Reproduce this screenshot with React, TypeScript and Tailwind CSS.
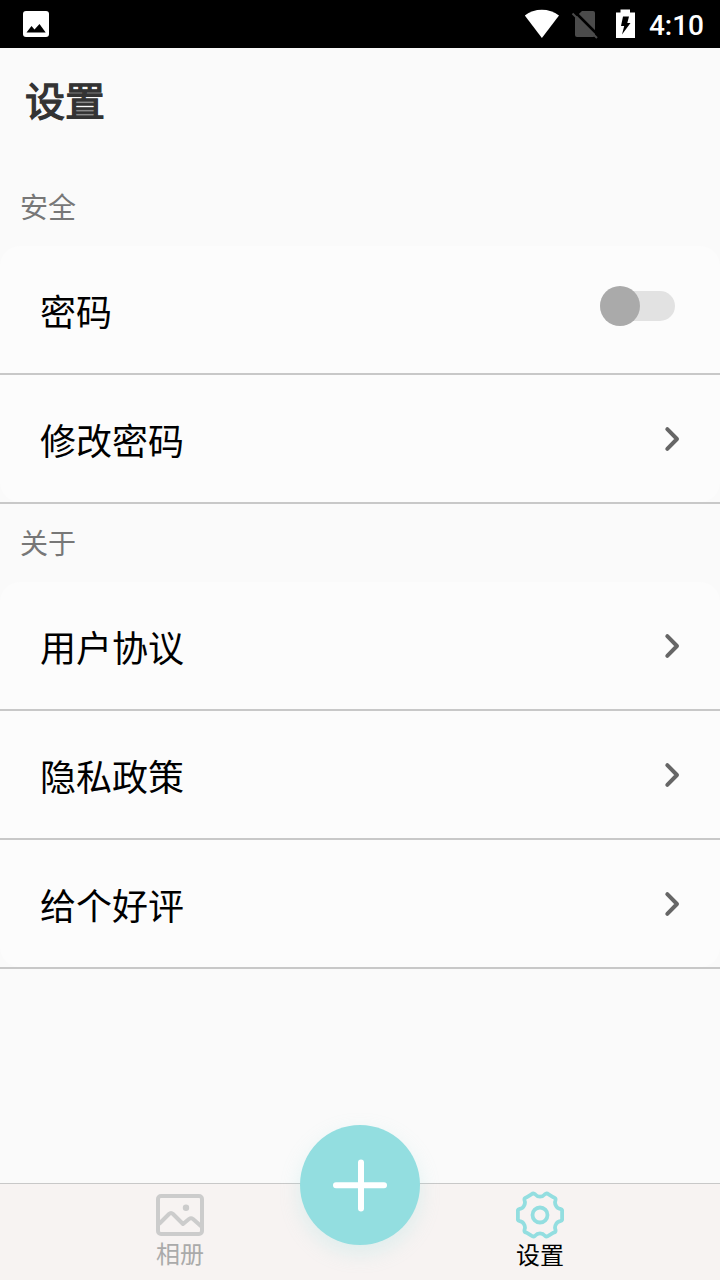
import { ReactNode, useState } from "react";

const sections = [
    { title: "安全", items: [{ label: "密码", toggle: true }, { label: "修改密码" }] },
    { title: "关于", items: [{ label: "用户协议" }, { label: "隐私政策" }, { label: "给个好评" }] },
]

export default function App() {
    return (
        <div className="flex flex-col h-[1280px] w-[720px] overflow-hidden bg-[#fafafa] font-['Roboto','Noto_Sans_CJK_SC',sans-serif]">
            <StatusBar />
            <header className="h-[120px] pl-[25px] pt-[26px]">
                <h1 className="text-[40px] leading-[58px] text-[#333333] [-webkit-text-stroke:1.3px_#333333]">设置</h1>
            </header>
            <main className="flex-1">
                {sections.map(section => (
                    <section key={section.title}>
                        <h2 className="h-[78px] pt-[2px] pl-5 text-[28px] leading-[78px] text-[#777777]">{section.title}</h2>
                        <ul>
                            {section.items.map(item => (
                                <SettingRow key={item.label} label={item.label}>
                                    {"toggle" in item ? <Toggle /> : <Chevron />}
                                </SettingRow>
                            ))}
                        </ul>
                    </section>
                ))}
            </main>
            <TabBar />
        </div>
    )
}

const SettingRow = ({ label, children }: { label: string, children: ReactNode }) => {
    return (
        <li className="group h-[129px] border-b-2 border-[#c8c8c8]">
            <div className="flex items-center justify-between h-full pl-10 pr-10 bg-[#fcfcfc] group-first:rounded-t-[20px] group-last:rounded-b-[20px]">
                <span className="text-4xl leading-[52px] pt-[9px] text-black">{label}</span>
                {children}
            </div>
        </li>
    )
}

const Toggle = () => {
    const [on, setOn] = useState<boolean>(false)

    return (
        <button onClick={() => setOn(!on)} className="flex items-center w-[75px] h-10 mr-[5px] mb-[7px]">
            <span className={`flex items-center w-full h-[30px] rounded-full bg-[#e2e2e2] ${on && "justify-end"}`}>
                <span className="w-10 h-10 shrink-0 rounded-full bg-[#aaaaaa]" />
            </span>
        </button>
    )
}

const Chevron = () => (
    <svg className="w-4 h-[26px]" viewBox="0 0 16 26" fill="none" stroke="#666666" strokeWidth="4" strokeLinecap="round" strokeLinejoin="round">
        <path d="M3.3 3.2 L13 13 L3.3 22.8" />
    </svg>
)

const StatusBar = () => {
    return (
        <div className="flex items-center justify-between h-12 shrink-0 pl-[23px] pr-4 bg-black">
            <svg className="w-[26px] h-[26px]" viewBox="0 0 26 26">
                <rect width="26" height="26" rx="3" fill="#fff" />
                <path d="M3.5 21.5 L8.5 15 L11.5 18.5 L16.5 13 L22.7 21.5 Z" fill="#000" />
            </svg>
            <div className="flex items-center">
                <svg className="w-[180px] h-12 -mr-[55px]" viewBox="0 0 180 48">
                    <path d="M0.8 15.5 C10 7.8 25.5 7.8 35 15.5 L17.9 38 Z" fill="#fff" />
                    <path d="M58 11 H69 Q71 11 71 13 V35 Q71 37 69 37 H53 Q51 37 51 35 V17.5 Z" fill="#4b4b4b" />
                    <path d="M50.5 11.5 L74.5 35.5" stroke="#000" strokeWidth="2.5" />
                    <path d="M48.5 13.5 L73 38" stroke="#4b4b4b" strokeWidth="2" />
                    <path d="M92 12.5 H96.5 V9.5 H106 V12.5 H111 V38 H92 Z" fill="#fff" />
                    <path d="M99 16.5 H105 L103.3 23 H106.5 L98 34.5 L100.2 26 H97 Z" fill="#000" />
                </svg>
                <span className="text-[28px] leading-8 pt-[3px] font-medium text-white">4:10</span>
            </div>
        </div>
    )
}

const TabBar = () => {
    return (
        <nav className="relative flex h-[97px] shrink-0 border-t border-[#c8c8c8] bg-[#f7f3f2]">
            <button className="flex flex-col items-center w-1/2 pt-[10px]">
                <svg className="w-12 h-[42px]" viewBox="0 0 48 42" fill="none" stroke="#cccccc" strokeWidth="4" strokeLinejoin="round">
                    <rect x="2" y="2" width="44" height="38" rx="3" />
                    <path d="M3 30 L13 20 Q15 18 17 20 L27 30 L33 25 Q35 23.5 37 25 L46 33" />
                    <circle cx="30" cy="13.7" r="3.2" fill="#cccccc" stroke="none" />
                </svg>
                <span className="text-2xl leading-[38px] text-[#aaaaaa]">相册</span>
            </button>
            <button className="flex flex-col items-center w-1/2 pt-[7px]">
                <svg className="w-12 h-12" viewBox="-24 -24 48 48" fill="none" stroke="#93dee0" strokeWidth="3.8" strokeLinejoin="round">
                    <path d="M22.1 2.8 L22.1 -2.8 Q22.7 -5.5 20.2 -6.15 Q17.4 -6.6 16 -9.2 Q14.4 -11.8 15.4 -14.45 Q16.1 -16.9 13.5 -17.7 L8.6 -20.6 Q6.6 -22.4 4.8 -20.6 Q3 -18.4 0 -18.4 Q-3 -18.4 -4.8 -20.6 Q-6.6 -22.4 -8.6 -20.6 L-13.5 -17.7 Q-16.1 -16.9 -15.4 -14.45 Q-14.4 -11.8 -16 -9.2 Q-17.4 -6.6 -20.2 -6.15 Q-22.7 -5.5 -22.1 -2.8 L-22.1 2.8 Q-22.7 5.5 -20.2 6.15 Q-17.4 6.6 -16 9.2 Q-14.4 11.8 -15.4 14.45 Q-16.1 16.9 -13.5 17.7 L-8.6 20.6 Q-6.6 22.4 -4.8 20.6 Q-3 18.4 0 18.4 Q3 18.4 4.8 20.6 Q6.6 22.4 8.6 20.6 L13.5 17.7 Q16.1 16.9 15.4 14.45 Q14.4 11.8 16 9.2 Q17.4 6.6 20.2 6.15 Q22.7 5.5 22.1 2.8 Z" />
                    <circle r="7.5" />
                </svg>
                <span className="text-2xl leading-[35px] text-black">设置</span>
            </button>
            {/* floating add button, overlaps the top edge of the bar */}
            <button className="absolute left-[300px] -top-[59px] w-[120px] h-[120px] rounded-full bg-[#93dee0] shadow-[0_8px_20px_rgba(147,222,224,0.25)]">
                <svg className="w-full h-full" viewBox="0 0 120 120" stroke="#fff" strokeWidth="6" strokeLinecap="round">
                    <path d="M36 60.3 H84 M61 37.5 V83.5" />
                </svg>
            </button>
        </nav>
    )
}
